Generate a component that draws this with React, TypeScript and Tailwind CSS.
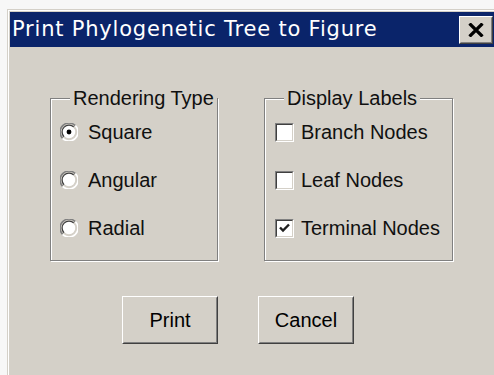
import React from "react";

const RADIOS = [
  { label: "Square", checked: true },
  { label: "Angular", checked: false },
  { label: "Radial", checked: false },
];

const CHECKS = [
  { label: "Branch Nodes", checked: false },
  { label: "Leaf Nodes", checked: false },
  { label: "Terminal Nodes", checked: true },
];

function Radio({ checked }: { checked: boolean }) {
  return (
    <svg width="18" height="18" viewBox="0 0 17 17" className="shrink-0">
      {/* classic sunken ring */}
      <path d="M2.5 14.5 A8 8 0 0 1 14.5 2.5" fill="none" stroke="#808080" strokeWidth="1.5" />
      <path d="M14.5 2.5 A8 8 0 0 1 2.5 14.5" fill="none" stroke="#ffffff" strokeWidth="1.5" />
      <circle cx="8.5" cy="8.5" r="6.5" fill="#ffffff" />
      <path d="M3.9 13.1 A6.5 6.5 0 0 1 13.1 3.9" fill="none" stroke="#404040" strokeWidth="1.2" />
      <path d="M13.1 3.9 A6.5 6.5 0 0 1 3.9 13.1" fill="none" stroke="#d4d0c8" strokeWidth="1.2" />
      {checked && <circle cx="8.5" cy="8.5" r="2.3" fill="#000000" />}
    </svg>
  );
}

function Check({ checked }: { checked: boolean }) {
  return (
    <div className="w-[19px] h-[19px] shrink-0 border border-t-[#808080] border-l-[#808080] border-r-white border-b-white">
      <div className="w-full h-full bg-white border border-t-[#404040] border-l-[#404040] border-r-[#d4d0c8] border-b-[#d4d0c8] flex items-center justify-center">
        {checked && (
          <svg width="11" height="10" viewBox="0 0 11 10">
            <path d="M1 4.5 L4 7.5 L10 1.5" fill="none" stroke="#202020" strokeWidth="2.4" />
          </svg>
        )}
      </div>
    </div>
  );
}

function GroupBox({ title, width, children }: { title: string; width: string; children: React.ReactNode }) {
  return (
    <div className={`relative ${width} h-[163px] border border-[#808080] shadow-[1px_1px_0_#ffffff,inset_1px_1px_0_#ffffff]`}>
      <span className="absolute -top-[12px] left-[19px] px-[3px] bg-[#d4d0c8] leading-[22px] text-[20px]">
        {title}
      </span>
      <div className="flex flex-col pt-[9px]">{children}</div>
    </div>
  );
}

function Button({ label }: { label: string }) {
  return (
    <button className="w-[96px] h-[48px] bg-[#d4d0c8] border border-t-white border-l-white border-r-[#404040] border-b-[#404040] text-[20px] text-black">
      <div className="w-full h-full flex items-center justify-center border border-t-[#d4d0c8] border-l-[#d4d0c8] border-r-[#808080] border-b-[#808080]">
        {label}
      </div>
    </button>
  );
}

export default function App() {
  return (
    <div className="w-[494px] h-[375px] overflow-hidden bg-[#f7f7f7] pt-[9px] pl-[7px] font-['Liberation_Sans',Arial,sans-serif] text-[#101010]">
      {/* Window frame */}
      <div className="h-[380px] border-t border-l border-[#d4d0c8]">
        <div className="h-full border-t border-l border-white">
          <div className="h-full border-t border-l border-[#d4d0c8] bg-[#d4d0c8]">
            {/* Title bar */}
            <div className="h-[35px] bg-[#0a246a] flex items-center justify-between pl-[2px] pr-[1px]">
              <span className="text-white text-[21px] tracking-[0.8px] font-['DejaVu_Sans',Verdana,sans-serif]">
                Print Phylogenetic Tree to Figure
              </span>
              <div className="w-[34px] h-[28px] bg-[#d4d0c8] border border-t-white border-l-white border-r-[#404040] border-b-[#404040]">
                <div className="w-full h-full flex items-center justify-center border border-t-[#d4d0c8] border-l-[#d4d0c8] border-r-[#808080] border-b-[#808080]">
                  <svg width="16" height="14" viewBox="0 0 16 14">
                    <path d="M1.5 0.5 L14.5 13.5 M14.5 0.5 L1.5 13.5" stroke="#000" strokeWidth="3.2" />
                  </svg>
                </div>
              </div>
            </div>

            {/* Body */}
            <div className="pt-[51px] pl-[40px]">
              <div className="flex gap-[46px]">
                <GroupBox title="Rendering Type" width="w-[168px]">
                  {RADIOS.map((r) => (
                    <div key={r.label} className="h-[48px] flex items-center pl-[9px] gap-[10px] text-[20px]">
                      <Radio checked={r.checked} />
                      <span>{r.label}</span>
                    </div>
                  ))}
                </GroupBox>
                <GroupBox title="Display Labels" width="w-[189px]">
                  {CHECKS.map((c) => (
                    <div key={c.label} className="h-[48px] flex items-center pl-[10px] gap-[7px] text-[20px]">
                      <Check checked={c.checked} />
                      <span>{c.label}</span>
                    </div>
                  ))}
                </GroupBox>
              </div>

              <div className="flex gap-[40px] pl-[72px] pt-[35px]">
                <Button label="Print" />
                <Button label="Cancel" />
              </div>
            </div>
          </div>
        </div>
      </div>
    </div>
  );
}
